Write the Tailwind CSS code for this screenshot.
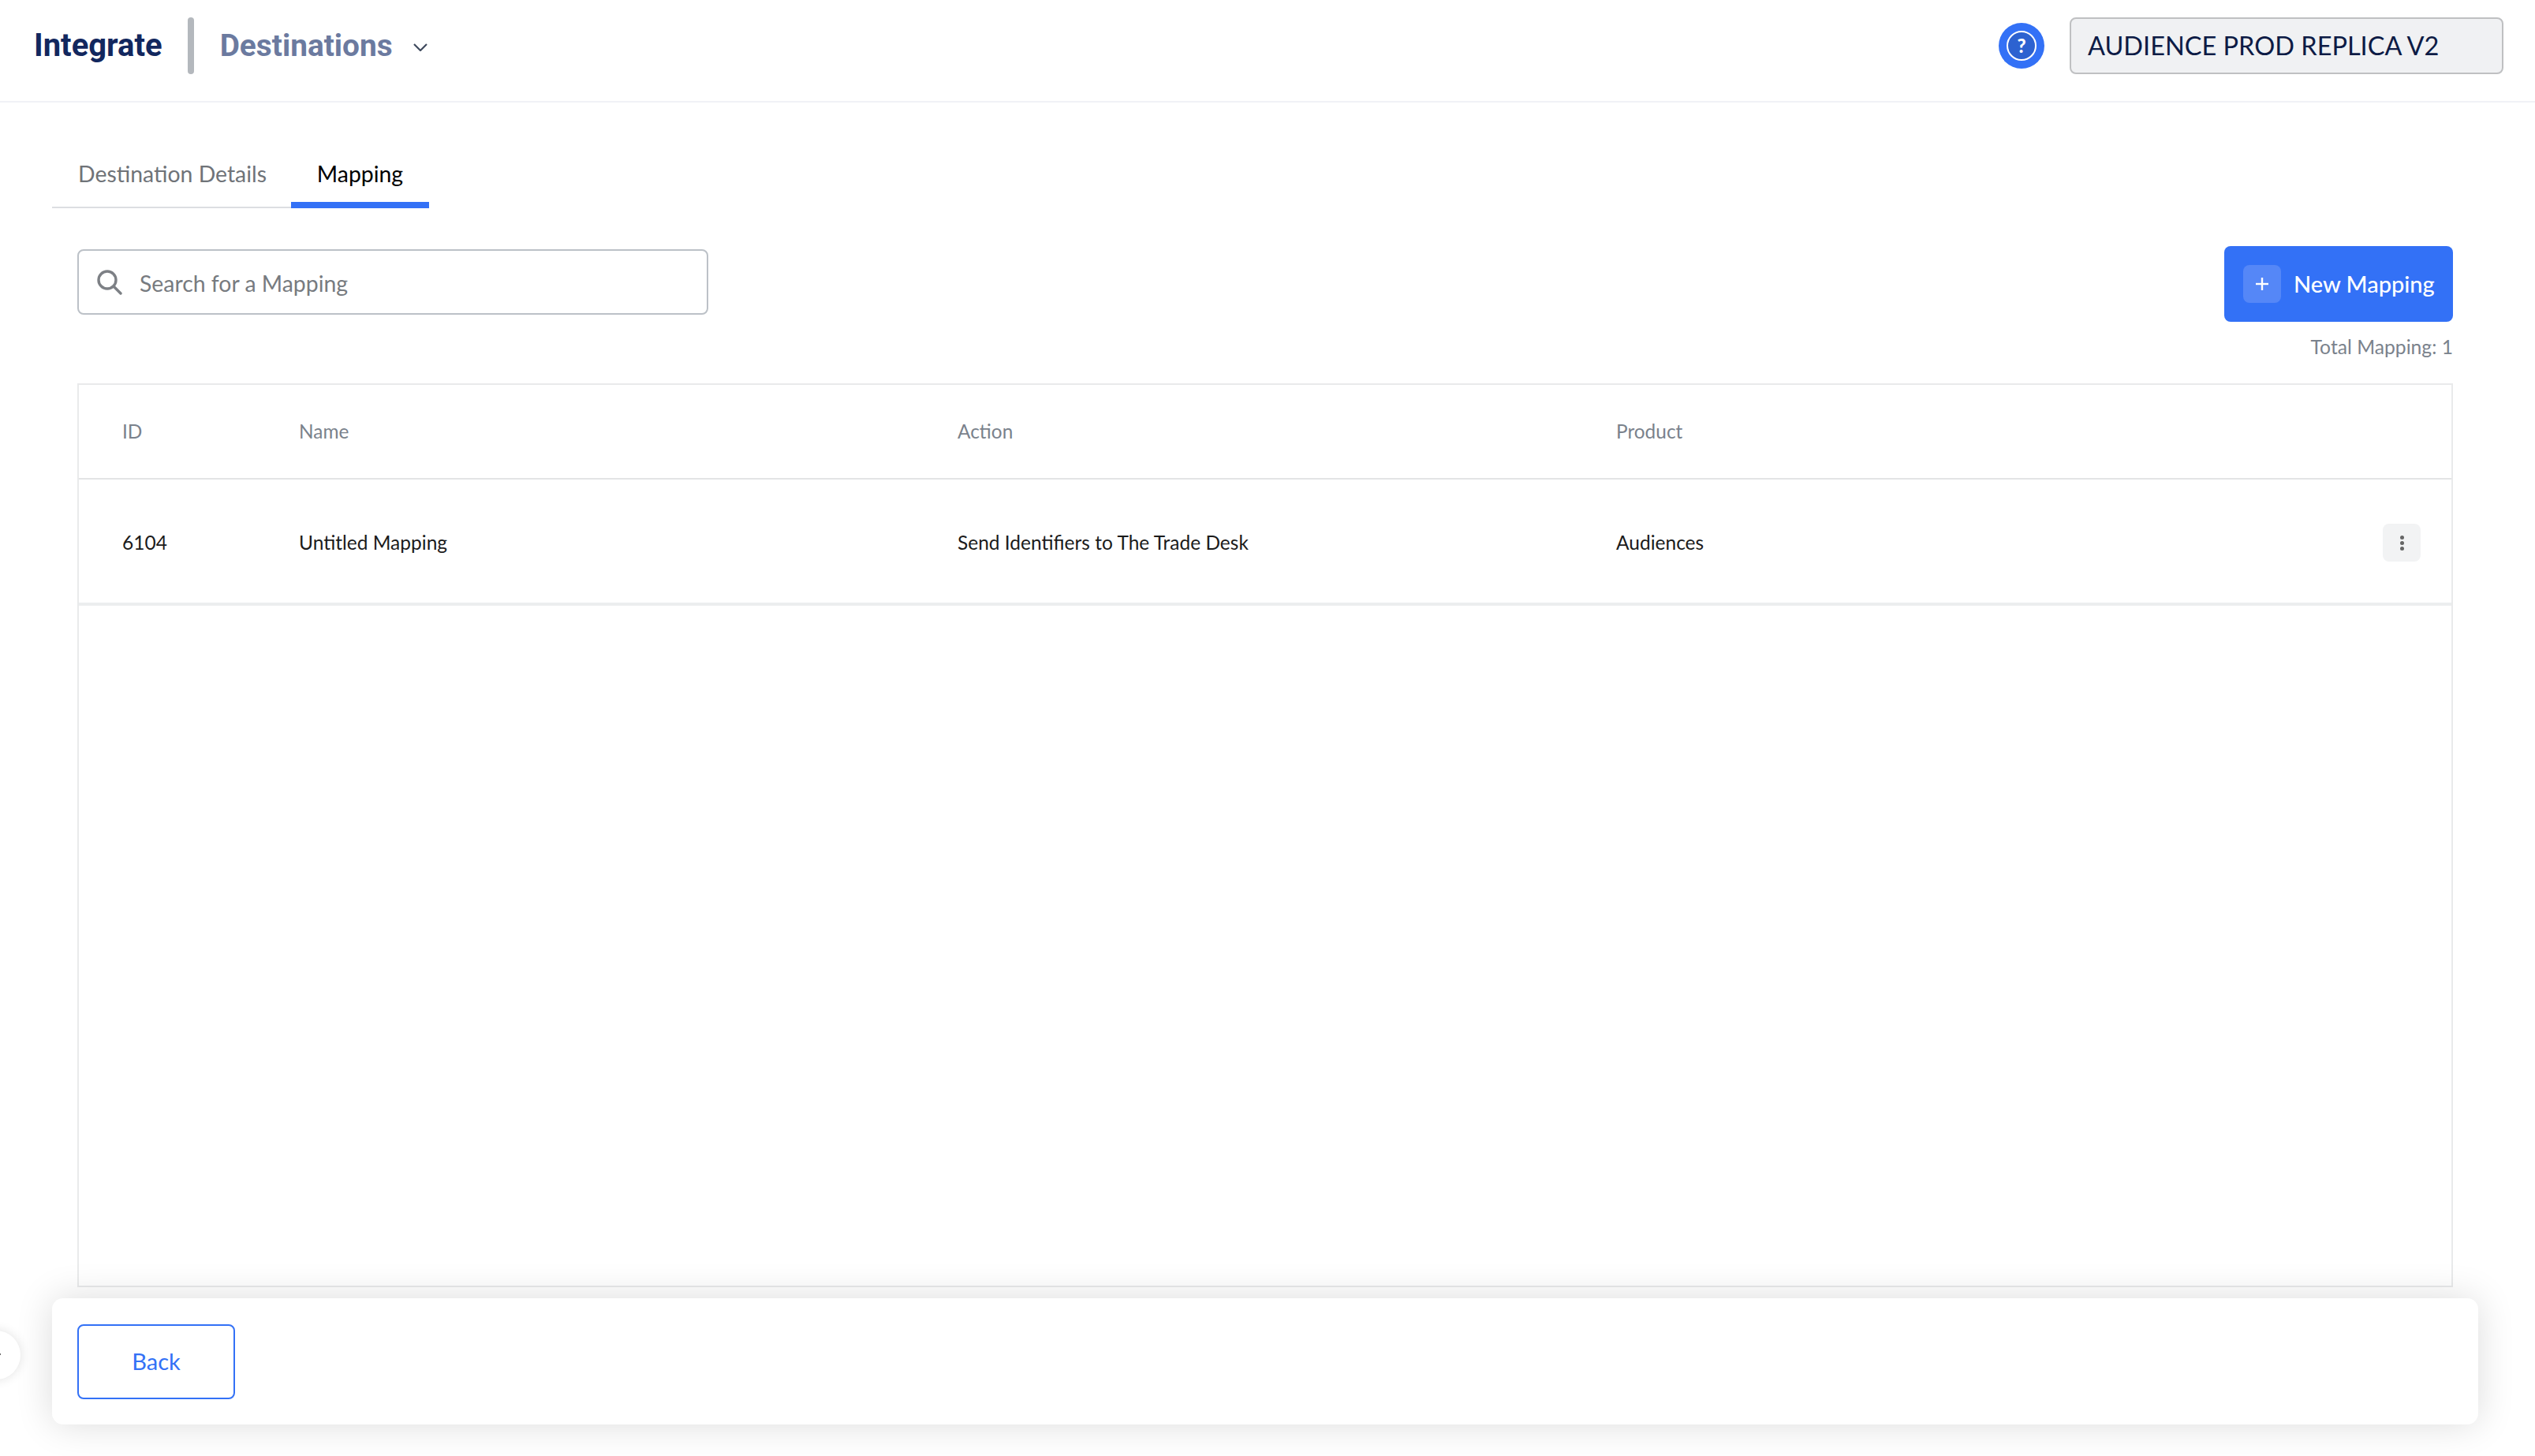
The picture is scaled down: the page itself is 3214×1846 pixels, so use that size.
<!DOCTYPE html>
<html lang="en">

<head>
    <meta charset="UTF-8">
    <script src="https://cdn.jsdelivr.net/npm/@tailwindcss/browser@4"></script>
    <title>Integrate - Destinations</title>
</head>

<body class="bg-white text-black font-['Lato',sans-serif]">
    <div class="relative flex h-[1846px] w-full flex-col overflow-hidden">
        <header class="flex h-[130px] shrink-0 items-center justify-between border-b-2 border-[#f1f2f6] pb-[12px] pl-[43px] pr-[40px]">
            <div class="flex items-center">
                <span class="font-['Roboto',sans-serif] text-[40px] font-bold text-[#12275e]">Integrate</span>
                <div class="ml-[32px] h-[72px] w-[8px] rounded-full bg-[#b4b8bd]"></div>
                <span class="ml-[33px] font-['Roboto',sans-serif] text-[38.8px] font-bold text-[#6b7a9f]">Destinations</span>
                <svg class="ml-[26px] mt-[4px]" width="18" height="10" viewBox="0 0 18 10" fill="none" stroke="#3f4a5e" stroke-width="2.2"><polyline points="1,1 9,9 17,1" /></svg>
            </div>
            <div class="flex items-center gap-[32px]">
                <div class="flex h-[58px] w-[58px] items-center justify-center rounded-full bg-[#3371f6]">
                    <div class="flex h-[38px] w-[38px] items-center justify-center rounded-full border-2 border-white bg-[#2d62d0] text-[24px] font-black text-white">?</div>
                </div>
                <div class="flex h-[72px] w-[550px] items-center rounded-[8px] border-2 border-[#bfc0c2] bg-[#f0f1f3] pl-[21px] pt-[1px] text-[32.5px] text-[#0d1b45]">AUDIENCE PROD REPLICA V2</div>
            </div>
        </header>

        <main class="flex min-h-0 flex-1 flex-col pl-[66px] pr-[72px]">
            <nav class="flex h-[134px] shrink-0 items-end">
                <a class="flex h-[72px] w-[303px] items-start border-b-2 border-[#dcdee2] pl-[33px] pt-[7px] text-[28.4px] text-[#6f7378]">Destination Details</a>
                <a class="flex h-[80px] w-[175px] items-start justify-center border-b-8 border-[#3371f6] pt-[15px] text-[28.4px] text-black">Mapping</a>
            </nav>

            <div class="flex min-h-0 flex-1 flex-col px-[32px]">
                <div class="mt-[48px] flex shrink-0 items-start justify-between">
                    <div class="mt-[4px] flex h-[83px] w-[800px] items-center rounded-[8px] border-2 border-[#bcc1c7] pl-[23px] text-[28.4px] text-[#777b80]">
                        <svg width="32" height="32" viewBox="0 0 32 32" fill="none" stroke="#7d8085" stroke-width="3.4"><circle cx="13" cy="13" r="11" /><line x1="21" y1="21" x2="30" y2="30" stroke-linecap="round" /></svg>
                        <span class="ml-[22px] pt-[3px]">Search for a Mapping</span>
                    </div>
                    <div class="flex flex-col items-end">
                        <button class="flex h-[96px] w-[290px] items-center rounded-[8px] bg-[#3371f6] pl-[24px] text-[29px] font-medium text-white">
                            <span class="flex h-[48px] w-[48px] items-center justify-center rounded-[8px] bg-[#5587f7]">
                                <svg width="18" height="18" viewBox="0 0 18 18" stroke="white" stroke-width="2.4"><line x1="9" y1="1" x2="9" y2="17" /><line x1="1" y1="9" x2="17" y2="9" /></svg>
                            </span>
                            <span class="ml-[16px]">New Mapping</span>
                        </button>
                        <span class="mt-[18px] h-[28px] text-[24.7px] leading-[28px] text-[#7a828c]">Total Mapping: 1</span>
                    </div>
                </div>

                <div class="mt-[32px] min-h-0 flex-1 border-2 border-[#e9eaeb]">
                    <div class="grid h-[120px] grid-cols-[224px_835px_835px_1fr] items-center border-b-2 border-[#e3e4e5] pl-[55px] text-[24.4px] text-[#7a828c]">
                        <span>ID</span>
                        <span>Name</span>
                        <span>Action</span>
                        <span>Product</span>
                    </div>
                    <div class="grid h-[160px] grid-cols-[224px_835px_835px_1fr] items-center border-b-4 border-[#eceeef] pl-[55px] pt-[4px] text-[24.5px] text-[#1b1b1b]">
                        <span>6104</span>
                        <span>Untitled Mapping</span>
                        <span>Send Identifiers to The Trade Desk</span>
                        <div class="flex items-center justify-between pr-[39px]">
                            <span>Audiences</span>
                            <div class="flex h-[48px] w-[48px] flex-col items-center justify-center gap-[2px] rounded-[8px] bg-[#f2f3f4]">
                                <span class="h-[5px] w-[5px] rounded-full bg-[#666]"></span>
                                <span class="h-[5px] w-[5px] rounded-full bg-[#666]"></span>
                                <span class="h-[5px] w-[5px] rounded-full bg-[#666]"></span>
                            </div>
                        </div>
                    </div>
                </div>
            </div>

            <footer class="relative mb-[40px] mt-[14px] flex h-[160px] shrink-0 items-center rounded-[14px] bg-white pl-[32px] shadow-[0_0_48px_rgba(0,0,0,0.14)]">
                <button class="h-[95px] w-[200px] rounded-[8px] border-2 border-[#3371f6] text-[29px] text-[#3371f6]">Back</button>
            </footer>
        </main>

        <div class="absolute left-[-36px] top-[1687px] h-[62px] w-[62px] rounded-full bg-white shadow-[0_0_14px_rgba(0,0,0,0.12)]">
            <svg class="absolute left-[28px] top-[25px]" width="10" height="10" viewBox="0 0 10 10" fill="none" stroke="#222" stroke-width="1.6"><polyline points="4,1 8,5 4,9" /></svg>
        </div>
    </div>
</body>

</html>
